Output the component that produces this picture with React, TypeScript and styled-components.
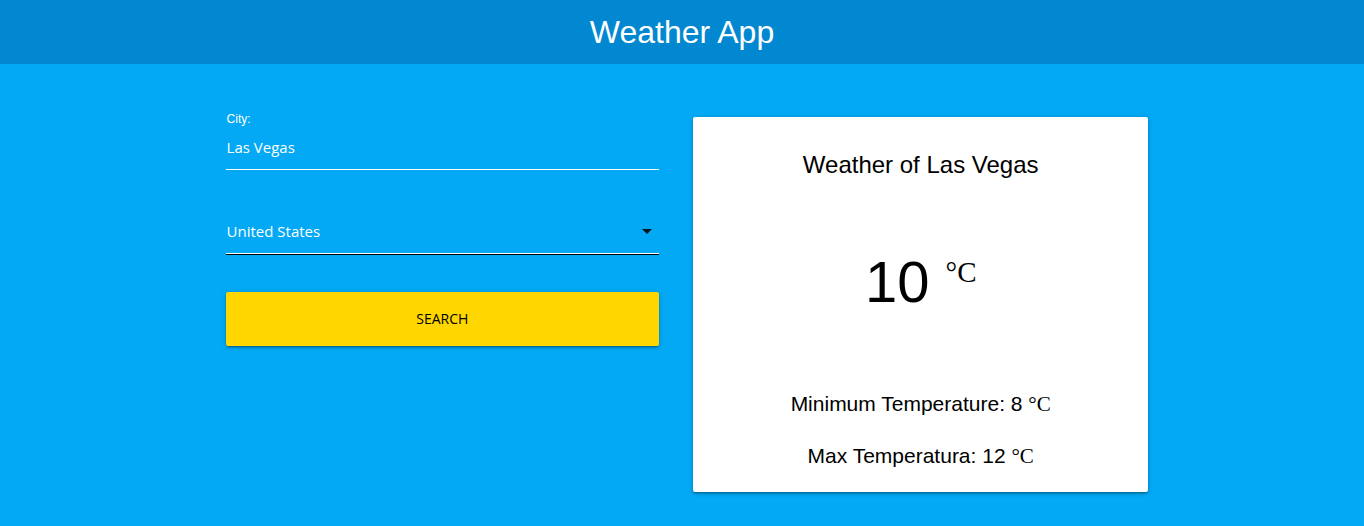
import React, { useState } from "react";
import styled, { createGlobalStyle } from "styled-components";

const GlobalStyle = createGlobalStyle`
  *, *::before, *::after { box-sizing: border-box; }
  body {
    margin: 0;
    min-height: 100vh;
    background: #03a9f4;
    color: #000;
    font-family: "Liberation Sans", Arial, sans-serif;
  }
`;

const uiFont = `"Open Sans", "Noto Sans", sans-serif`;
const raised = `0 2px 2px 0 rgba(0, 0, 0, 0.14), 0 3px 1px -2px rgba(0, 0, 0, 0.12), 0 1px 5px 0 rgba(0, 0, 0, 0.2)`;

const Header = styled.header`
  background: #0288d1;
`;

const Title = styled.h1`
  margin: 0;
  color: #fff;
  font-size: 32px;
  font-weight: 400;
  line-height: 64px;
  text-align: center;
`;

const Container = styled.main`
  display: grid;
  grid-template-columns: 1fr 1fr;
  align-items: start;
  width: 70%;
  max-width: 1280px;
  margin: 0 auto;
  padding: 45px 11px 34px;
`;

const Form = styled.form`
  padding: 0 23px 0 10px;
`;

const Label = styled.label`
  display: block;
  padding-left: 1px;
  color: #fff;
  font-size: 12px;
  line-height: 20px;
`;

const TextInput = styled.input`
  display: block;
  width: 100%;
  height: 41px;
  margin: 0 0 40px;
  padding: 0 0 4px 1px;
  border: 0;
  border-bottom: 1px solid #fff;
  border-radius: 0;
  outline: 0;
  background: transparent;
  color: #fff;
  font: 15px ${uiFont};
`;

const SelectWrap = styled.div`
  position: relative;
  margin-bottom: 37px;
  border-bottom: 1px solid #000;
`;

const Select = styled.select`
  display: block;
  width: 100%;
  height: 44px;
  padding: 0 24px 2px 1px;
  border: 0;
  border-bottom: 1px solid #fff;
  border-radius: 0;
  outline: 0;
  appearance: none;
  background: transparent;
  color: #fff;
  font: 15px ${uiFont};

  option { color: #000; }
`;

const Caret = styled.svg`
  position: absolute;
  top: 9px;
  right: 0;
  width: 24px;
  height: 24px;
  fill: rgba(0, 0, 0, 0.87);
  pointer-events: none;
`;

const SearchButton = styled.button`
  display: block;
  width: 100%;
  height: 54px;
  padding: 0 16px 2px;
  border: 0;
  border-radius: 2px;
  background: #ffd600;
  box-shadow: ${raised};
  color: #000;
  cursor: pointer;
  font: 14px ${uiFont};
  text-transform: uppercase;
`;

const Card = styled.section`
  margin: 8px 0 0 11px;
  padding: 24px 24px 21px;
  border-radius: 2px;
  background: #fff;
  box-shadow: ${raised};
  text-align: center;
`;

const CardTitle = styled.h2`
  margin: 0 0 57px;
  font-size: 24px;
  font-weight: 400;
  line-height: 48px;
`;

const Current = styled.p`
  margin: 0 0 71px;
  font-size: 58px;
  line-height: 72px;
`;

const Detail = styled.p`
  margin: 0 0 22px;
  font-size: 21px;
  line-height: 30px;

  &:last-child { margin-bottom: 0; }
`;

const Unit = styled.span<{ $raised?: boolean }>`
  font-family: "Liberation Serif", "Times New Roman", serif;
  font-size: ${(p) => (p.$raised ? "29px" : "21px")};
  vertical-align: ${(p) => (p.$raised ? "20px" : "baseline")};
  line-height: 1;
`;

export default function App() {
  const [city, setCity] = useState("Las Vegas");
  return (
    <>
      <GlobalStyle />
      <Header>
        <Title>Weather App</Title>
      </Header>
      <Container>
        <Form onSubmit={(e) => e.preventDefault()}>
          <Label htmlFor="city">City:</Label>
          <TextInput
            id="city"
            type="text"
            value={city}
            onChange={(e) => setCity(e.target.value)}
          />
          <SelectWrap>
            <Select aria-label="Country" defaultValue="US">
              <option value="US">United States</option>
            </Select>
            <Caret viewBox="0 0 24 24" aria-hidden="true">
              <path d="M7 10l5 5 5-5z" />
            </Caret>
          </SelectWrap>
          <SearchButton type="submit">Search</SearchButton>
        </Form>
        <Card>
          <CardTitle>Weather of Las Vegas</CardTitle>
          <Current>
            10 <Unit $raised>°C</Unit>
          </Current>
          <Detail>
            Minimum Temperature: 8 <Unit>°C</Unit>
          </Detail>
          <Detail>
            Max Temperatura: 12 <Unit>°C</Unit>
          </Detail>
        </Card>
      </Container>
    </>
  );
}
